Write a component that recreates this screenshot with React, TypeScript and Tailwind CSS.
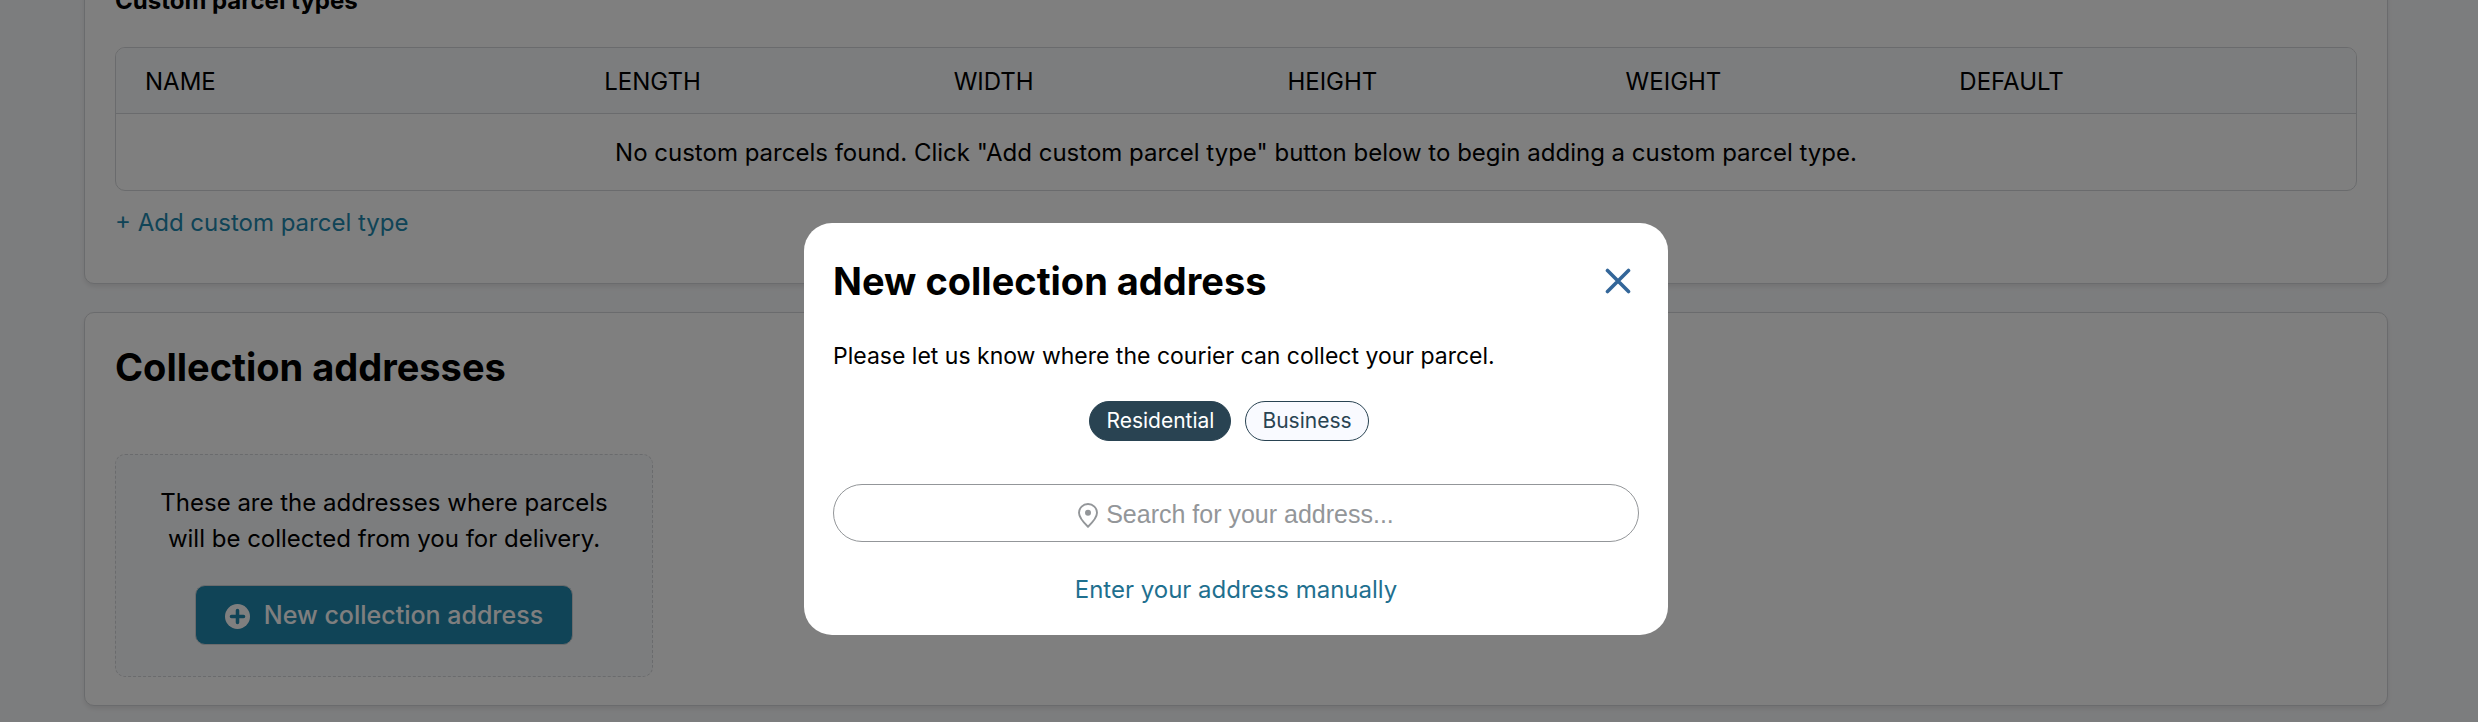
import React from "react";

const COLUMNS = [
  { label: "Name", width: "w-[20.5%]" },
  { label: "Length", width: "w-[15.6%]" },
  { label: "Width", width: "w-[14.9%]" },
  { label: "Height", width: "w-[15.1%]" },
  { label: "Weight", width: "w-[14.9%]" },
  { label: "Default", width: "w-[19%]" },
];

function PlusCircle() {
  return (
    <svg viewBox="0 0 24 24" className="size-[25px] shrink-0" aria-hidden="true">
      <circle cx="12" cy="12" r="12" fill="#fff" />
      <path d="M12 6.200v11.600M6.200 12h11.600" stroke="#2188ae" strokeWidth="3.400" strokeLinecap="round" />
    </svg>
  );
}

function Pin() {
  return (
    <svg viewBox="0 0 20 25" className="h-[25px] w-5 shrink-0" fill="none" aria-hidden="true">
      <path
        d="M10 1C5 1 1 4.900 1 9.800 1 14.500 4.500 18.500 10 23.700 15.500 18.500 19 14.500 19 9.800 19 4.900 15 1 10 1Z"
        stroke="#939699"
        strokeWidth="1.900"
      />
      <circle cx="10" cy="9.800" r="3" fill="#939699" />
    </svg>
  );
}

function ParcelTypes() {
  return (
    <section className="-mt-[18px] rounded-b-[10px] border border-[#d5d7da] bg-white px-[30px] pb-[42px] shadow-[0_3px_4px_rgba(0,0,0,0.08)]">
      <h2 className="text-2xl leading-9 font-bold">Custom parcel types</h2>
      <div className="mt-7 overflow-hidden rounded-[10px] border border-[#d5d7da]">
        <table className="w-full table-fixed border-collapse">
          <thead className="bg-[#f9fafc]">
            <tr className="border-b border-[#d5d7da]">
              {COLUMNS.map((c) => (
                <th key={c.label} className={`${c.width} h-[65px] pt-1 pl-[29px] text-left font-normal uppercase`}>
                  {c.label}
                </th>
              ))}
            </tr>
          </thead>
          <tbody>
            <tr>
              <td colSpan={6} className="h-[77px] pt-0.5 text-center">
                No custom parcels found. Click "Add custom parcel type" button below to begin adding a custom parcel type.
              </td>
            </tr>
          </tbody>
        </table>
      </div>
      <button type="button" className="mt-3.5 block leading-9 text-[#2188ae]">
        + Add custom parcel type
      </button>
    </section>
  );
}

function CollectionAddresses() {
  return (
    <section className="mt-7 rounded-[10px] border border-[#d5d7da] bg-white p-[30px] pb-7 shadow-[0_3px_4px_rgba(0,0,0,0.08)]">
      <h2 className="text-[38px] leading-[48px] font-bold">Collection addresses</h2>
      <div className="mt-[63px] flex w-[538px] flex-col items-center rounded-[10px] border border-dashed border-[#d5d7da] bg-[#f9fafc] px-10 pt-[30px] pb-[31px] text-center">
        <p className="leading-9">
          These are the addresses where parcels
          <br />
          will be collected from you for delivery.
        </p>
        <button
          type="button"
          className="mt-7 flex h-[60px] items-center gap-3.5 rounded-[10px] border border-[#d5d7da] bg-[#2188ae] px-[29px] pt-0.5 text-[25px] font-medium whitespace-nowrap text-white"
        >
          <PlusCircle />
          New collection address
        </button>
      </div>
    </section>
  );
}

function AddressDialog() {
  return (
    <div className="fixed inset-0 flex items-start justify-center bg-black/50 pt-[223px] pr-1.5">
      <div role="dialog" aria-modal="true" aria-labelledby="dialog-title" className="w-[864px] rounded-[28px] bg-white px-[29px] pt-8 pb-[27px]">
        <div className="flex items-center justify-between">
          <h2 id="dialog-title" className="text-[38px] leading-[52px] font-bold">
            New collection address
          </h2>
          <button type="button" aria-label="Close" className="mr-2">
            <svg viewBox="0 0 26 26" className="size-[26px]" aria-hidden="true">
              <path d="M2.500 2.500l21 21M23.500 2.500l-21 21" stroke="#336699" strokeWidth="3.600" strokeLinecap="round" />
            </svg>
          </button>
        </div>
        <p className="mt-[31px] text-[23px] leading-9">Please let us know where the courier can collect your parcel.</p>
        <div className="mt-[27px] flex justify-center text-[21px]">
          <button type="button" aria-pressed="true" className="mr-3.5 h-10 rounded-full border border-[#294352] bg-[#294352] px-4 text-white">
            Residential
          </button>
          <button type="button" aria-pressed="false" className="mr-3.5 h-10 rounded-full border border-[#294352] bg-[#f9faff] px-4 text-[#294352]">
            Business
          </button>
        </div>
        <label className="mt-[43px] flex h-[58px] items-center justify-center gap-2 rounded-full border border-[#939699] pt-1">
          <Pin />
          <input
            type="text"
            aria-label="Search for your address"
            placeholder="Search for your address..."
            className="field-sizing-content font-['Liberation_Sans',sans-serif] text-[25px] outline-none placeholder:text-[#939699]"
          />
        </label>
        <div className="mt-[30px] text-center">
          <button type="button" className="leading-9 text-[#1f708f]">
            Enter your address manually
          </button>
        </div>
      </div>
    </div>
  );
}

export default function App() {
  return (
    <div className="h-screen overflow-hidden bg-[#f9fafc] pr-[90px] pl-[84px] font-['Inter',sans-serif] text-2xl text-black">
      <ParcelTypes />
      <CollectionAddresses />
      <AddressDialog />
    </div>
  );
}
